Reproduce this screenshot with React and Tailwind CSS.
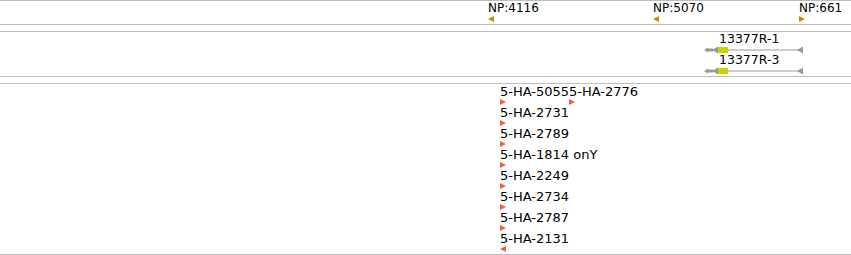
import React from "react";

const font = { fontFamily: '"DejaVu Sans", Verdana, sans-serif' };

function LeftTri({ color }) {
  return (
    <svg className="block shrink-0" width="6" height="6" viewBox="0 0 6 6">
      <polygon points="6,0 0,3 6,6" fill={color} />
    </svg>
  );
}
function RightTri({ color }) {
  return (
    <svg className="block shrink-0" width="6" height="6" viewBox="0 0 6 6">
      <polygon points="0,0 6,3 0,6" fill={color} />
    </svg>
  );
}

function GeneGlyph() {
  return (
    <svg className="block shrink-0" width="100" height="8" viewBox="0 0 100 8">
      <polygon points="0,4 4,1.5 4,6.5" fill="#999" />
      <rect x="4" y="2.5" width="5" height="3" fill="#999" />
      <polygon points="8,4 14,0.5 14,7.5" fill="#999" />
      <rect x="14" y="1" width="10" height="6" fill="#c6d400" />
      <rect x="24" y="3.5" width="74" height="1" fill="#999" />
      <polygon points="93,4 99,0.5 99,7.5" fill="#999" />
    </svg>
  );
}

function NpFeature({ label, left, dir }) {
  return (
    <div className="absolute top-0 flex flex-col gap-[1px]" style={{ left }}>
      <span className="text-[12px] leading-[14px] whitespace-nowrap">{label}</span>
      {dir === "left" ? <LeftTri color="#c88a00" /> : <RightTri color="#c88a00" />}
    </div>
  );
}

function RedFeature({ label, dir = "right" }) {
  return (
    <div className="flex flex-col">
      <span className="text-[13px] leading-[15px] whitespace-nowrap">{label}</span>
      {dir === "left" ? <LeftTri color="#f4603c" /> : <RightTri color="#f4603c" />}
    </div>
  );
}

const redRows = [
  "5-HA-2731",
  "5-HA-2789",
  "5-HA-1814 onY",
  "5-HA-2249",
  "5-HA-2734",
  "5-HA-2787",
];

export default function App() {
  return (
    <div className="w-[851px] h-[255px] bg-white text-black overflow-hidden flex flex-col gap-[6px]" style={font}>
      <div className="relative h-[25px] shrink-0 border-y border-[#bdbdbd]">
        <NpFeature label="NP:4116" left={488} dir="left" />
        <NpFeature label="NP:5070" left={653} dir="left" />
        <NpFeature label="NP:661" left={799} dir="right" />
      </div>
      <div className="h-[46px] shrink-0 border-y border-[#bdbdbd] pl-[704px] flex flex-col">
        {["13377R-1", "13377R-3"].map((g) => (
          <div key={g} className="h-[21px] flex flex-col">
            <span className="ml-[15px] text-[12.5px] leading-[14px] whitespace-nowrap">{g}</span>
            <GeneGlyph />
          </div>
        ))}
      </div>
      <div className="h-[172px] shrink-0 border-y border-[#bdbdbd] pl-[500px] flex flex-col">
        <div className="h-[21px] flex">
          <div className="w-[69px]">
            <RedFeature label="5-HA-5055" />
          </div>
          <RedFeature label="5-HA-2776" />
        </div>
        {redRows.map((t) => (
          <div key={t} className="h-[21px]">
            <RedFeature label={t} />
          </div>
        ))}
        <div className="h-[21px]">
          <RedFeature label="5-HA-2131" dir="left" />
        </div>
      </div>
    </div>
  );
}
